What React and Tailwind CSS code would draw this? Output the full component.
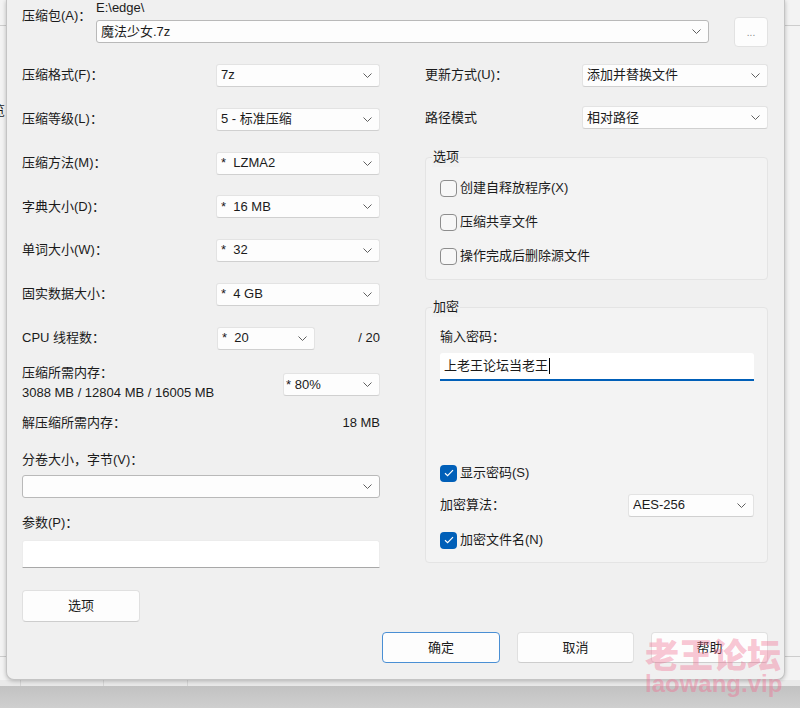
import React from "react";

function Chevron() {
  return (
    <svg width="9" height="5" viewBox="0 0 9 5" className="shrink-0">
      <path d="M0.5 0.5L4.5 4.5L8.5 0.5" fill="none" stroke="#5f5f5f" strokeWidth="1" />
    </svg>
  );
}

function Combo({ text = "", className = "", editable = false }) {
  return (
    <div
      className={
        "flex h-[23px] items-center rounded-[3px] bg-[#fdfdfd] pl-[4px] pr-[7px] " +
        (editable ? "border border-[#b9b9b9] " : "border border-[#e3e3e3] border-b-[#d0d0d0] ") +
        className
      }
    >
      <span className="flex-1 truncate whitespace-pre leading-[20px]">{text}</span>
      <Chevron />
    </div>
  );
}

function Check({ checked = false, label, className = "" }) {
  return (
    <div className={"flex items-center " + className}>
      {checked ? (
        <span className="flex h-[17px] w-[17px] items-center justify-center rounded-[4px] bg-[#005fb8]">
          <svg width="10" height="8" viewBox="0 0 10 8">
            <path d="M1 4.2L3.6 6.6L9 1.2" fill="none" stroke="#ffffff" strokeWidth="1.2" />
          </svg>
        </span>
      ) : (
        <span className="h-[17px] w-[17px] rounded-[4px] border border-[#8d8d8d] bg-[#f7f7f7]" />
      )}
      <span className="ml-[3px] leading-[20px]">{label}</span>
    </div>
  );
}

function Btn({ children, className = "" }) {
  return (
    <div
      className={
        "flex items-center justify-center rounded-[4px] bg-[#fdfdfd] " + className
      }
    >
      {children}
    </div>
  );
}

const leftRows = [
  ["压缩格式(F)：", "7z", "h-[44px]"],
  ["压缩等级(L)：", "5 - 标准压缩", "h-[44px]"],
  ["压缩方法(M)：", "*  LZMA2", "h-[44px]"],
  ["字典大小(D)：", "*  16 MB", "h-[43px]"],
  ["单词大小(W)：", "*  32", "h-[44px]"],
  ["固实数据大小：", "*  4 GB", "h-[44px]"],
];

export default function App() {
  return (
    <div className="relative h-[708px] w-[800px] overflow-hidden bg-[#f3f3f3] font-['Liberation_Sans','Noto_Sans_CJK_SC',sans-serif] text-[13px] text-[#1b1b1b]">
      {/* underlying window bits */}
      <div className="absolute left-0 right-0 top-[25px] h-px bg-[#cdcdcd]" />
      <div className="absolute left-0 right-0 top-[656px] h-px bg-[#cdcdcd]" />
      <span className="absolute left-[-8px] top-[101px] text-[13px] leading-[20px]">览</span>
      <div className="absolute left-0 right-0 top-[680px] h-[6px] bg-[#e9e9e9]" />
      <div className="absolute left-[20px] top-[680px] h-[6px] w-px bg-[#d6d6d6]" />
      <div className="absolute left-[103px] top-[680px] h-[6px] w-px bg-[#d6d6d6]" />
      <div className="absolute left-[187px] top-[680px] h-[6px] w-px bg-[#d6d6d6]" />
      <div className="absolute bottom-0 left-0 right-0 top-[686px] bg-gradient-to-b from-[#c2c2c2] to-[#cfcfcf]" />

      {/* dialog */}
      <div className="relative ml-[6px] flex h-[680px] w-[779px] flex-col rounded-b-[8px] border-x border-b border-[#c4c4c4] bg-[#f0f0f0] pl-[15px] pr-[16px] shadow-[0_1px_4px_rgba(0,0,0,0.25)]">
        {/* top */}
        <div className="flex h-[48px]">
          <div className="w-[74px] pt-[6px] leading-[20px]">压缩包(A)：</div>
          <div className="flex w-[613px] flex-col">
            <div className="h-[20px] leading-[16px]">E:\edge\</div>
            <Combo editable text="魔法少女.7z" className="w-full" />
          </div>
          <Btn className="ml-[25px] mt-[17px] h-[30px] w-[34px] border border-[#e2e2e2] text-[10px] text-[#8a8a8a]">
            ...
          </Btn>
        </div>

        {/* columns */}
        <div className="mt-[5px] flex justify-between">
          {/* left */}
          <div className="flex w-[358px] flex-col">
            {leftRows.map(([label, value, h]) => (
              <div key={label} className={"flex items-center justify-between " + h}>
                <span className="leading-[20px]">{label}</span>
                <Combo text={value} className="w-[164px]" />
              </div>
            ))}
            <div className="flex h-[44px] items-center">
              <span className="w-[195px] leading-[20px]">CPU 线程数：</span>
              <Combo text="*  20" className="w-[98px]" />
              <span className="flex-1 text-right leading-[20px]">/ 20</span>
            </div>
            <div className="flex h-[46px] justify-between">
              <div className="pt-[3px] leading-[20px]">
                <div>压缩所需内存：</div>
                <div>3088 MB / 12804 MB / 16005 MB</div>
              </div>
              <Combo text="* 80%" className="mt-[13px] w-[97px] !pl-[2px]" />
            </div>
            <div className="mt-[7px] flex h-[20px] justify-between leading-[20px]">
              <span>解压缩所需内存：</span>
              <span>18 MB</span>
            </div>
            <div className="mt-[17px] h-[20px] leading-[20px]">分卷大小，字节(V)：</div>
            <Combo editable className="mt-[5px] w-full" />
            <div className="mt-[15px] h-[20px] leading-[20px]">参数(P)：</div>
            <div className="mt-[7px] h-[28px] rounded-t-[3px] border border-[#ececec] border-b-[#a8a8a8] bg-[#ffffff]" />
            <Btn className="mt-[22px] h-[32px] w-[118px] border border-[#e0e0e0] border-b-[#cdcdcd]">选项</Btn>
          </div>

          {/* right */}
          <div className="flex w-[343px] flex-col">
            <div className="flex h-[44px] items-center justify-between">
              <span className="leading-[20px]">更新方式(U)：</span>
              <Combo text="添加并替换文件" className="w-[186px]" />
            </div>
            <div className="flex h-[41px] items-center justify-between">
              <span className="leading-[20px]">路径模式</span>
              <Combo text="相对路径" className="w-[186px]" />
            </div>

            <div className="relative z-10 ml-[7px] mt-[9px] h-[20px] self-start bg-[#f0f0f0] px-px leading-[20px]">选项</div>
            <div className="-mt-[10px] flex h-[123px] flex-col rounded-[4px] border border-[#e4e4e4] bg-[#f3f3f3] pl-[14px] pt-[13px]">
              <Check label="创建自释放程序(X)" className="h-[34px]" />
              <Check label="压缩共享文件" className="h-[34px]" />
              <Check label="操作完成后删除源文件" className="h-[34px]" />
            </div>

            <div className="relative z-10 ml-[7px] mt-[17px] h-[20px] self-start bg-[#f0f0f0] px-px leading-[20px]">加密</div>
            <div className="-mt-[10px] flex h-[256px] flex-col rounded-[4px] border border-[#e4e4e4] bg-[#f3f3f3] pl-[14px] pr-[13px] pt-[19px]">
              <div className="h-[20px] leading-[20px]">输入密码：</div>
              <div className="mt-[6px] flex h-[28px] items-center rounded-t-[3px] border-b-2 border-[#005fb8] bg-[#ffffff] pl-[4px]">
                <span className="leading-[20px]">上老王论坛当老王</span>
                <span className="ml-[1px] h-[16px] w-px bg-[#000000]" />
              </div>
              <Check checked label="显示密码(S)" className="mt-[75px] h-[34px]" />
              <div className="flex h-[30px] items-center justify-between">
                <span className="leading-[20px]">加密算法：</span>
                <Combo text="AES-256" className="w-[126px]" />
              </div>
              <Check checked label="加密文件名(N)" className="mt-[3px] h-[34px]" />
            </div>
          </div>
        </div>

        {/* buttons */}
        <div className="mt-[10px] flex justify-end gap-[17px]">
          <Btn className="h-[31px] w-[118px] border border-[#4a8fd4]">确定</Btn>
          <Btn className="h-[31px] w-[117px] border border-[#e0e0e0] border-b-[#cdcdcd]">取消</Btn>
          <Btn className="h-[31px] w-[117px] border border-[#e0e0e0] border-b-[#cdcdcd]">帮助</Btn>
        </div>
      </div>

      {/* watermark */}
      <div className="pointer-events-none absolute left-[645px] top-[637px] font-['Noto_Sans_CJK_SC',sans-serif] text-[34px] font-black leading-none text-[rgba(240,110,145,0.4)]">
        老王论坛
      </div>
      <div className="pointer-events-none absolute left-[645px] top-[672px] font-['Liberation_Sans',sans-serif] text-[24px] font-bold leading-none text-[rgba(240,110,145,0.42)]">
        laowang.vip
      </div>
    </div>
  );
}
